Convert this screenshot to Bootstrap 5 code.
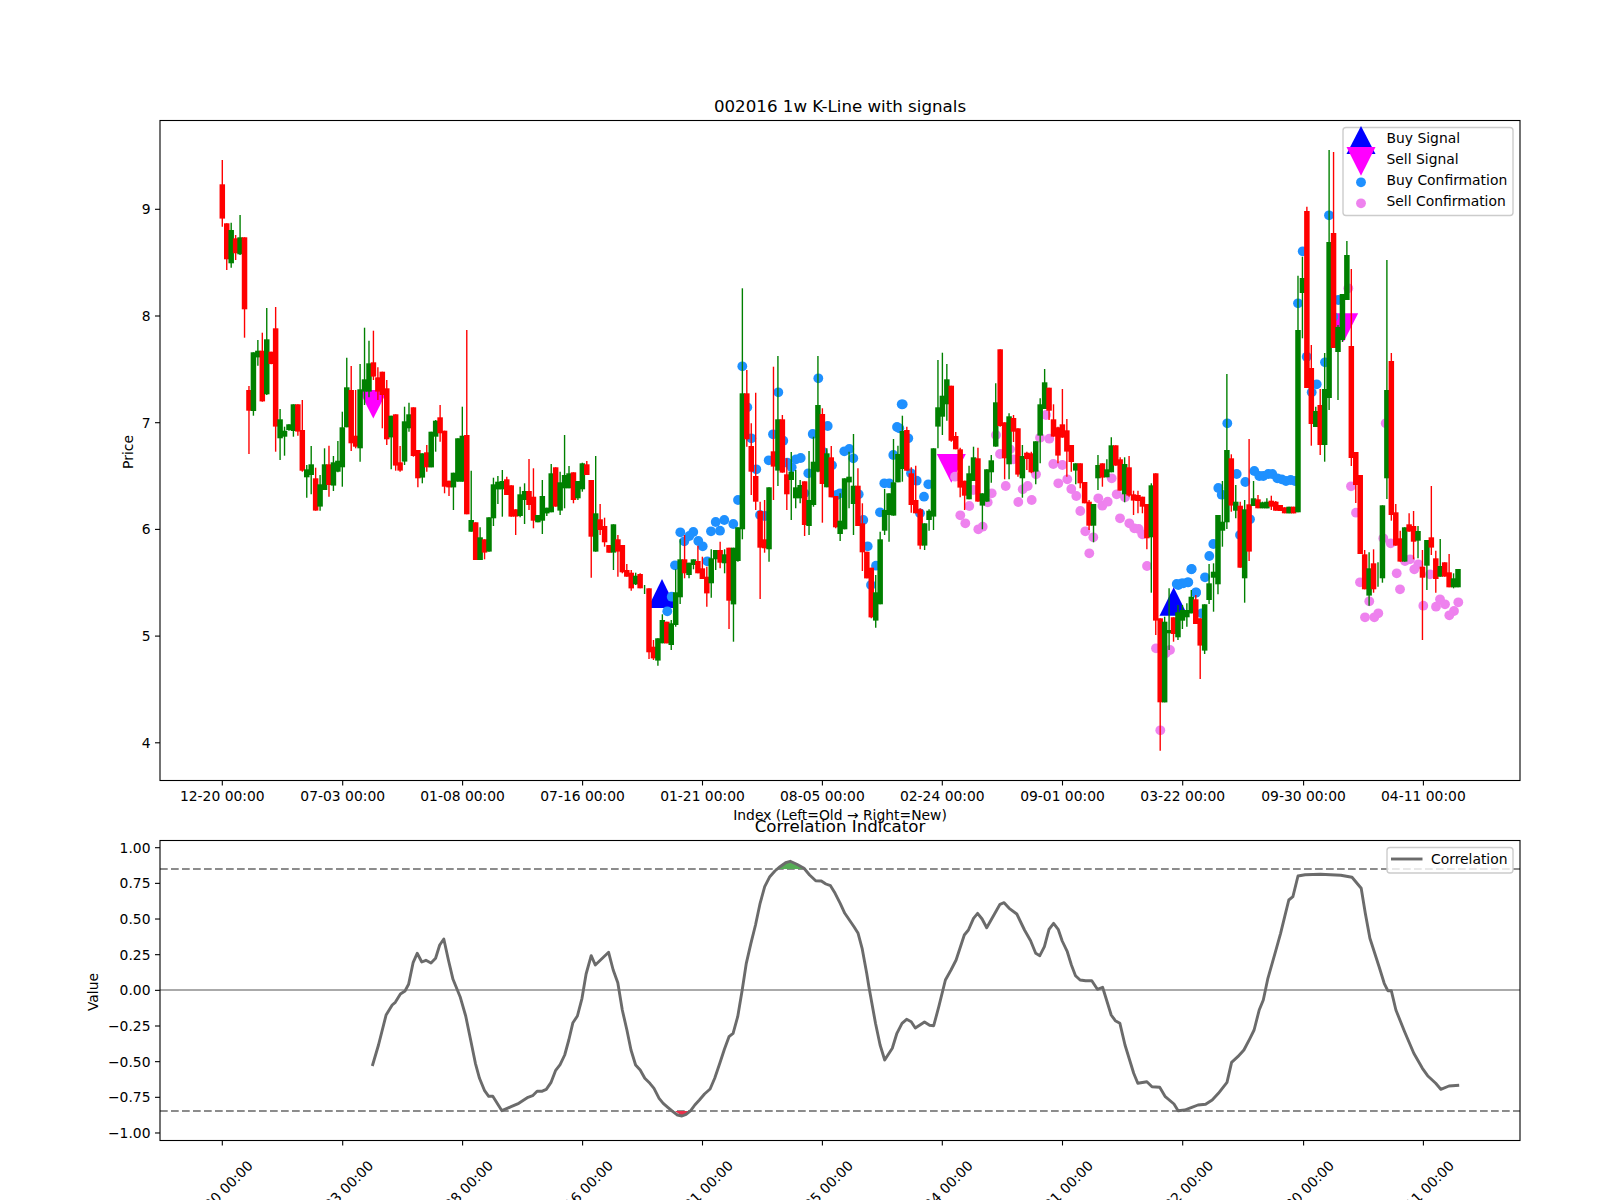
<!DOCTYPE html>
<html lang="en">
<head>
<meta charset="utf-8">
<title>002016 1w K-Line with signals</title>
<link href="https://cdn.jsdelivr.net/npm/bootstrap@5.3.0/dist/css/bootstrap.min.css" rel="stylesheet">
<style>
html,body{margin:0;padding:0;background:#fff;overflow:hidden}
.figure-wrap{width:1600px;height:1200px}
.plot-svg{display:block;width:1600px;height:1200px;font-family:"DejaVu Sans",sans-serif;fill:#000}
.tk{font-size:13.89px}
.ttl{font-size:16.67px}
.frame{fill:none;stroke:#000;stroke-width:1.1}
.tick-line{stroke:#000;stroke-width:1.1}
.leg-box{fill:#fff;fill-opacity:.8;stroke:#ccc;stroke-width:1.4}
.thresh{stroke:#8c8c8c;stroke-width:2.2;stroke-dasharray:7.7 3.3;fill:none}
.zero-line{stroke:#aaa;stroke-width:2.2}
.corr-line{fill:none;stroke:#6b6b6b;stroke-width:2.9;stroke-linejoin:round}
</style>
</head>
<body>
<div class="container-fluid p-0 figure-wrap">
<svg class="plot-svg" id="chart" viewBox="0 0 1600 1200" xmlns="http://www.w3.org/2000/svg">
  <g id="marks"></g>
  <rect class="frame" x="160" y="120.5" width="1360" height="660"/>
  <text class="ttl" x="840" y="112" text-anchor="middle">002016 1w K-Line with signals</text>
  <text class="tk" x="840" y="820" text-anchor="middle">Index (Left=Old → Right=New)</text>
  <text class="tk" transform="translate(133 452) rotate(-90)" text-anchor="middle">Price</text>
  <g id="legend1">
    <rect class="leg-box" x="1343" y="127.5" width="170" height="88" rx="3"/>
    <polygon points="1361,126 1375.5,154 1346.5,154" fill="#00f"/>
    <polygon points="1346.5,147 1375.5,147 1361,175.7" fill="#f0f"/>
    <circle cx="1361" cy="182.3" r="4.9" fill="#1e90ff"/>
    <circle cx="1361" cy="203.3" r="4.9" fill="#ee82ee"/>
    <text class="tk" x="1386.5" y="142.8">Buy Signal</text>
    <text class="tk" x="1386.5" y="163.8">Sell Signal</text>
    <text class="tk" x="1386.5" y="184.8">Buy Confirmation</text>
    <text class="tk" x="1386.5" y="205.8">Sell Confirmation</text>
  </g>
  <g id="lower"></g>
  <rect class="frame" x="160" y="840.5" width="1360" height="300"/>
  <text class="ttl" x="840" y="832" text-anchor="middle">Correlation Indicator</text>
  <text class="tk" transform="translate(98 992) rotate(-90)" text-anchor="middle">Value</text>
  <g>
    <rect class="leg-box" x="1387" y="847.5" width="126" height="25.5" rx="3"/>
    <line x1="1391" y1="859" x2="1422.5" y2="859" stroke="#6b6b6b" stroke-width="2.9"/>
    <text class="tk" x="1431" y="863.8">Correlation</text>
  </g>
  <g id="axes"></g>
</svg>
</div>
<script>
(function(){
var NS='http://www.w3.org/2000/svg';
function el(p,n,a,t){var e=document.createElementNS(NS,n);for(var k in a)e.setAttribute(k,a[k]);if(t!=null)e.textContent=t;p.appendChild(e);return e;}
var marks=document.getElementById('marks'),lower=document.getElementById('lower'),axes=document.getElementById('axes');
var X0=222.3,DX=4.445;

/* triangles */
function up(cx,t,b){el(marks,'polygon',{points:cx+','+t+' '+(cx+14.2)+','+b+' '+(cx-14.2)+','+b,fill:'#00f'});}
function dn(cx,t,b){el(marks,'polygon',{points:(cx-14.5)+','+t+' '+(cx+14.5)+','+t+' '+cx+','+b,fill:'#f0f'});}
up(662,579,608);up(1173.7,587.3,615.7);
dn(373.3,390,418.5);dn(951.3,454,482.7);dn(1343.7,313.3,341.7);

/* dots: frames are [xoff,yoff,pairs] in 3x crop coordinates */
var blue=[[500,280,[727,259,742,382,835,337,955,295,983,438,1205,373,1191,441,1180,525,1153,610,1168,610,1140,697,1103,799,1128,857,1113,915,754,475,769,568,819,463,850,482,938,462,806,541,862,548,875,562,888,538,902,534,925,580,996,556,968,515,1033,514,1048,507,1060,535,1010,645,1020,640,1076,643,1090,720,780,705,795,708,714,660,700,732,673,720,647,726,660,752,633,754,580,756,568,768,541,757,553,784,595,783,608,799,622,844,525,856,515,950,502,994,913,640]],
[900,300,[8,313,-2,385,25,415,33,520,50,542,85,553,72,590,60,640,875,807,888,878,835,855,850,850,865,847]],
[1180,400,[142,70,223,213,238,228,250,228,265,222,277,222,292,235,305,238,318,243,332,240,345,243,170,222,196,246,115,264,125,284,88,468,100,432,34,508,75,532,48,577,23,547,5,550,-10,552,65,640,180,405,210,358]],
[1180,110,[447,316,368,424,354,580,380,740,410,823,395,847,435,757,475,570,460,620]]];
var vio=[[900,300,[438,345,420,413,448,416,288,405,300,462,330,448,340,478,165,530,460,492,487,495,408,523,475,550,502,538,514,567,529,588,317,558,368,568,383,558,275,580,263,607,355,606,395,600,208,618,181,646,196,670,235,688,248,680,541,633,556,694,580,712,568,760,595,595,607,617,623,605,650,583,675,592,635,535,660,655,688,670,703,685,716,687,727,703,741,798,768,1045,810,1050,797,1060,781,1291,220,570]],
[1180,400,[513,259,528,338,610,415,632,430,690,478,675,483,715,493,703,508,650,520,660,568,750,523,540,547,568,604,555,652,583,652,595,640,730,617,780,598,768,620,795,613,835,607,822,633,808,646,617,70]],
[1180,110,[505,535]]];
function dots(list,c){list.forEach(function(f){var a=f[2];for(var i=0;i<a.length;i+=2)el(marks,'circle',{cx:(f[0]+a[i]/3).toFixed(1),cy:(f[1]+a[i+1]/3).toFixed(1),r:4.9,fill:c});});}
dots(blue,'#1e90ff');dots(vio,'#ee82ee');

/* candles: colour, body top, body bottom, wick top, wick bottom, in crop coordinates of a frame */
var frames=[
[90,"r283 386 210 410,r400 508 400 540,g420 520 398 533,r445 490 435 510,g442 493 375 495,r442 658 442 743,r900 962 888 1092,g787 963 787 977,g782 802 750 827,r782 934 728 935,g748 913 654 915,r785 822 785 823,r715 1010 651 1085,g988 1045 957 1110,g1022 1040 1010 1097,g1003 1020 1003 1022,g943 1023 943 1040,r943 1025 943 1037,r1020 1142 930 1145,g1138 1162 1125 1223,g1123 1155 1068 1213,r1165 1262 1133 1262,g1183 1250 1155 1262,g1123 1200 1075 1200,r1123 1185 1067 1220,g1117 1187 1098 1203,g1112 1145 1053 1147,g1012 1132 965 1190,g892 1012 803 1012,r900 1060 828 1083,r1037 1070 900 1075,g898 1075 822 1115,g868 905 713 945,g820 905 752 922,r817 860 722 870,r862 905 832 930,r845 915 845 1015,r895 1048 870 1065,g977 1042 977 1138,r973 1127 973 1142,r1117 1142 1068 1145,g994 1115 950 1125,g973 1015 938 1025,r952 1098 952 1100,r1080 1165 1080 1192,g1090 1163 1090 1180,r1087 1132 1065 1145,g1025 1132 1025 1132,g992 1040 990 1085,r982 1030 945 1055,r1022 1190 1022 1210,r1172 1192 1172 1218,g1148 1192 1148 1260,g1045 1175 1045 1175,g1037 1175 950 1175,r1035 1273 720 1273,g1290 1325 1142 1325,r1297 1410 1297 1410,g1342 1410 1312 1410,r1348 1388 1348 1408,g1282 1385 1282 1385,g1183 1285 1163 1308,g1175 1198 1158 1242"],
[280,"g603 628 570 710,r598 645 590 645,r616 710 616 710,r688 710 688 765,g643 708 620 712,g633 660 610 732,r633 675 537 690,r650 722 565 745,g705 727 705 727,g648 722 600 762,g683 700 683 708,g580 697 552 697,r562 680 562 680,g607 692 575 705,g585 625 465 685,g580 625 558 625,r577 660 577 670,g603 655 603 660,g550 628 548 635,r553 585 543 585,r600 770 600 893,g700 815 528 815,r718 750 672 765,r738 787 713 800,r795 818 795 818,g733 818 733 870,r778 815 765 890,r795 877 795 880,r870 890 852 890,r878 925 870 932,g887 913 878 915,r882 925 880 925,g915 916 915 942,r925 1117 925 1137,r1100 1135 1080 1140,g1075 1142 1075 1157,g1020 1090 1003 1090,r1025 1090 1025 1090,g1030 1095 1020 1110,g937 1035 868 1040,g838 952 778 972,r838 880 765 895,g848 885 848 895,g838 855 838 868,r843 880 797 880,r865 897 830 897,r890 940 860 980,g835 910 808 953,g810 838 810 870,r810 848 785 865,g823 850 808 880,r803 962 803 1047,g803 973 803 1085,g742 843 742 845,g340 748 25 778,r340 478 270 500,r498 575 430 645,r588 665 338 690,r693 803 665 957,r778 805 660 818,g622 808 622 845,r514 560 260 660,g418 572 228 618,r418 578 405 578,r583 643 535 690,g575 600 516 720,g622 655 570 685,g615 655 600 670,r604 735 604 768,g660 738 513 765,g545 675 470 680,g375 575 228 577,r402 612 385 728,g520 622 505 622,r532 652 498 652,r648 742 648 745,g722 762 640 783,g595 748 595 748,g590 607 515 685,g617 672 462 765,r617 738 565 738,r730 817 670 873,r815 895 815 895,r863 1012 863 1015,g937 1022 885 1043,g778 973 755 973,g690 752 627 765,g640 705 640 785,g607 707 477 707,g522 607 497 607"],
[300,"g393 507 347 545,r390 512 380 512,r520 615 502 638,r600 640 497 640,r628 737 625 748,g670 737 670 750,g632 660 628 692,g445 650 445 690,g322 380 180 445,g287 350 158 405,g238 313 192 362,r257 422 257 425,r408 448 396 448,r448 563 443 592,r542 587 542 630,g520 598 497 598,g472 543 440 543,r475 605 443 605,g580 617 580 688,g508 605 508 605,g481 517 465 548,g307 440 250 440,r148 378 148 380,r367 475 367 538,g349 493 340 538,r354 395 345 426,r385 524 385 530,g468 535 435 593,r458 477 455 510,r460 517 455 520,g424 515 424 553,g313 407 295 490,g247 327 207 327,r263 332 263 360,r358 410 313 410,r382 467 380 490,r373 413 267 413,r391 455 357 530,r435 486 435 515,g490 512 490 553,r490 550 490 565,r546 610 546 610,r605 677 600 690,g612 677 612 727,g495 535 465 570,r490 533 490 560,g508 532 478 532,g436 517 412 517,r436 497 436 497,r478 572 472 572,g492 583 472 607,r502 587 468 590,r583 602 572 645,r585 603 572 640,r590 620 590 640,r612 715 612 748,g556 712 550 878,r520 962 520 1005,r955 1207 955 1352,g965 1207 950 1207,g990 1000 865 1050,r952 1002 952 1025,g937 1012 915 1020,g930 962 915 987"],
[400,"g630 652 610 680,g590 640 570 640,r598 672 585 672,r655 737 655 837,g613 752 613 762,g550 600 492 612,g515 533 490 635,g345 553 345 583,g365 392 243 440,g150 367 -78 387,r175 317 163 335,g305 332 255 355,r317 503 305 503,g328 535 300 608,r313 455 117 483,g295 318 243 318,r298 325 285 325,g307 325 305 325,g305 325 295 325,r302 320 287 330,r305 332 303 332,r315 333 315 333,r322 340 322 340,g320 340 320 340,r320 340 320 340,g-210 337 -373 337"],
[0,"g278 293 256.7 338.3,r211 388 206.7 388,r368 424 345 445.7,g411 427 406.7 427,r405 445 389 455,g389 445 353 461.7,g242 398 150 410,r233 348 152 348,g327 352 325 400,g294 340 294 342,g255 300 241 300,r346 458 269 466,r452 485 452 503,r475 554 475 554"],
[400,"r463 568 450 568,g505 587 457 617,r490 568 448 578,g520 521 487 560,g316 535 316 548,g-30 235 -420 297,r-117 345 -141 362,r337 437 312 437,r415 485 392 485,g382 485 382 485,r373 395 340 395,r378 425 333 478,g393 422 378 475,r500 533 450 720,g420 497 420 570,r412 443 258 465,r475 537 452 578,g498 530 417 530,r487 530 487 530,r517 562 462 562,g535 562 520 565,g507 562 507 562"]
];
var n=0;
frames.forEach(function(fr){
  var off=fr[0],scale=off===0?1:1/3;
  fr[1].split(',').forEach(function(s){
    var col=s[0]==='r'?'#f00':'#008000',v=s.slice(1).split(' ').map(Number);
    var x=X0+DX*n;n++;
    var bt=off+v[0]*scale,bb=off+v[1]*scale,wt=off+v[2]*scale,wb=off+v[3]*scale;
    if(wb-wt>0)el(marks,'line',{x1:x.toFixed(2),x2:x.toFixed(2),y1:wt.toFixed(1),y2:wb.toFixed(1),stroke:col,'stroke-width':1.39});
    if(bb-bt>0.5)el(marks,'rect',{x:(x-2.75).toFixed(2),y:bt.toFixed(1),width:5.5,height:(bb-bt).toFixed(1),fill:col});
  });
});

/* lower panel */
var c6=[573,888,585,825,600,735,612,705,618,697,628,672,637,663,644,643,653,577,661,550,670,576,678,571,688,579,697,565,705,525,713,507,722,570,731,628,745,680,756,738,765,805,775,880,783,925,793,962,801,979,809,979,827,1022,845,1010,860,1000,878,982,887,977,896,964,905,964,914,958,923,938,932,902,941,884,950,855,958,810,966,758,975,738,984,685,992,612,1002,557,1010,585,1036,547,1045,600,1054,638,1063,720,1072,780,1080,840,1089,885,1098,900,1107,925,1117,940,1125,955,1135,985,1143,1000,1152,1012,1162,1025,1171,1035,1180,1038,1188,1033,1197,1022,1205,1005,1214,990,1224,972,1235,957,1244,925,1254,880,1263,838,1272,800,1280,790,1289,740,1298,660,1306,580,1315,520,1324,465,1333,400,1342,350,1352,320,1362,303,1372,290,1383,278,1392,274,1405,283,1419,295,1430,315,1442,332,1453,333,1462,342,1471,347,1480,370,1490,400,1499,430,1517,470,1525,490,1533,535,1542,610];
var c7=[135,650,148,760,157,825,166,870,181,835,190,790,200,760,209,748,218,755,226,774,244,756,254,766,262,767,272,710,285,630,296,600,306,570,322,495,330,480,340,445,348,430,357,447,366,473,392,403,400,398,410,415,425,432,440,480,452,512,462,550,470,557,479,530,488,478,497,460,506,478,514,513,524,545,532,585,540,617,549,630,560,632,572,632,583,658,593,652,610,735,618,752,627,760,637,825,654,910,662,940,680,935,690,950,705,952,716,980,733,1002,741,1022,754,1020,768,1012,780,1005,795,1003,808,990,820,970,837,937,846,877,858,860,870,840,882,805,890,780,900,720,908,690,917,625,932,545,942,490,950,440,958,390,966,380,976,318,990,314,1020,313,1060,316,1082,322,1100,355,1108,430,1117,505,1135,590,1145,640,1152,662,1159,662,1168,720,1185,785,1203,850,1220,895,1230,917,1246,940,1256,958,1272,948,1292,946];
var pts=[],i;
for(i=0;i<c6.length;i+=2)pts.push((80+c6[i]/1.96).toFixed(1)+','+(770+c6[i+1]/3).toFixed(1));
for(i=0;i<c7.length;i+=2)pts.push((800+c7[i]/1.96).toFixed(1)+','+(770+c7[i+1]/3).toFixed(1));
el(lower,'line',{'class':'zero-line',x1:160,x2:1520,y1:990,y2:990});
el(lower,'line',{'class':'thresh',x1:160,x2:1520,y1:869,y2:869});
el(lower,'line',{'class':'thresh',x1:160,x2:1520,y1:1111,y2:1111});
function zx(a){return (80+a/1.96).toFixed(1);}
function zy(a){return (770+a/3).toFixed(1);}
el(lower,'polygon',{points:zx(1362)+','+zy(297)+' '+zx(1372)+','+zy(290)+' '+zx(1383)+','+zy(278)+' '+zx(1392)+','+zy(274)+' '+zx(1405)+','+zy(283)+' '+zx(1419)+','+zy(297),fill:'#55ad55'});
el(lower,'polygon',{points:zx(1166)+','+zy(1023)+' '+zx(1180)+','+zy(1038)+' '+zx(1197)+','+zy(1023),fill:'#e8304a'});
el(lower,'polyline',{'class':'corr-line',points:pts.join(' ')});

/* axes ticks and labels */
var tx=[222.3,342.7,462.6,582.6,702.5,822.4,942.3,1062.5,1182.7,1303.6,1423.4];
var tl=['12-20 00:00','07-03 00:00','01-08 00:00','07-16 00:00','01-21 00:00','08-05 00:00','02-24 00:00','09-01 00:00','03-22 00:00','09-30 00:00','04-11 00:00'];
tx.forEach(function(x,k){
  el(axes,'line',{'class':'tick-line',x1:x,x2:x,y1:780.5,y2:785.5});
  el(axes,'line',{'class':'tick-line',x1:x,x2:x,y1:1140.5,y2:1145.5});
  el(axes,'text',{'class':'tk',x:x,y:801,'text-anchor':'middle'},tl[k]);
  el(axes,'text',{'class':'tk','text-anchor':'middle',transform:'translate('+(x-2)+' 1193) rotate(-45) translate(0 5)'},tl[k]);
});
[[9,209.3],[8,316],[7,422.7],[6,529.4],[5,636.1],[4,742.8]].forEach(function(t){
  el(axes,'line',{'class':'tick-line',x1:155,x2:160,y1:t[1],y2:t[1]});
  el(axes,'text',{'class':'tk',x:150.5,y:t[1]+5,'text-anchor':'end'},String(t[0]));
});
['1.00','0.75','0.50','0.25','0.00','\u22120.25','\u22120.50','\u22120.75','\u22121.00'].forEach(function(l,k){
  var y=847.7+k*35.66;
  el(axes,'line',{'class':'tick-line',x1:155,x2:160,y1:y,y2:y});
  el(axes,'text',{'class':'tk',x:150.5,y:y+5,'text-anchor':'end'},l);
});
})();
</script>
<script src="https://cdn.jsdelivr.net/npm/bootstrap@5.3.0/dist/js/bootstrap.bundle.min.js"></script>
</body>
</html>
